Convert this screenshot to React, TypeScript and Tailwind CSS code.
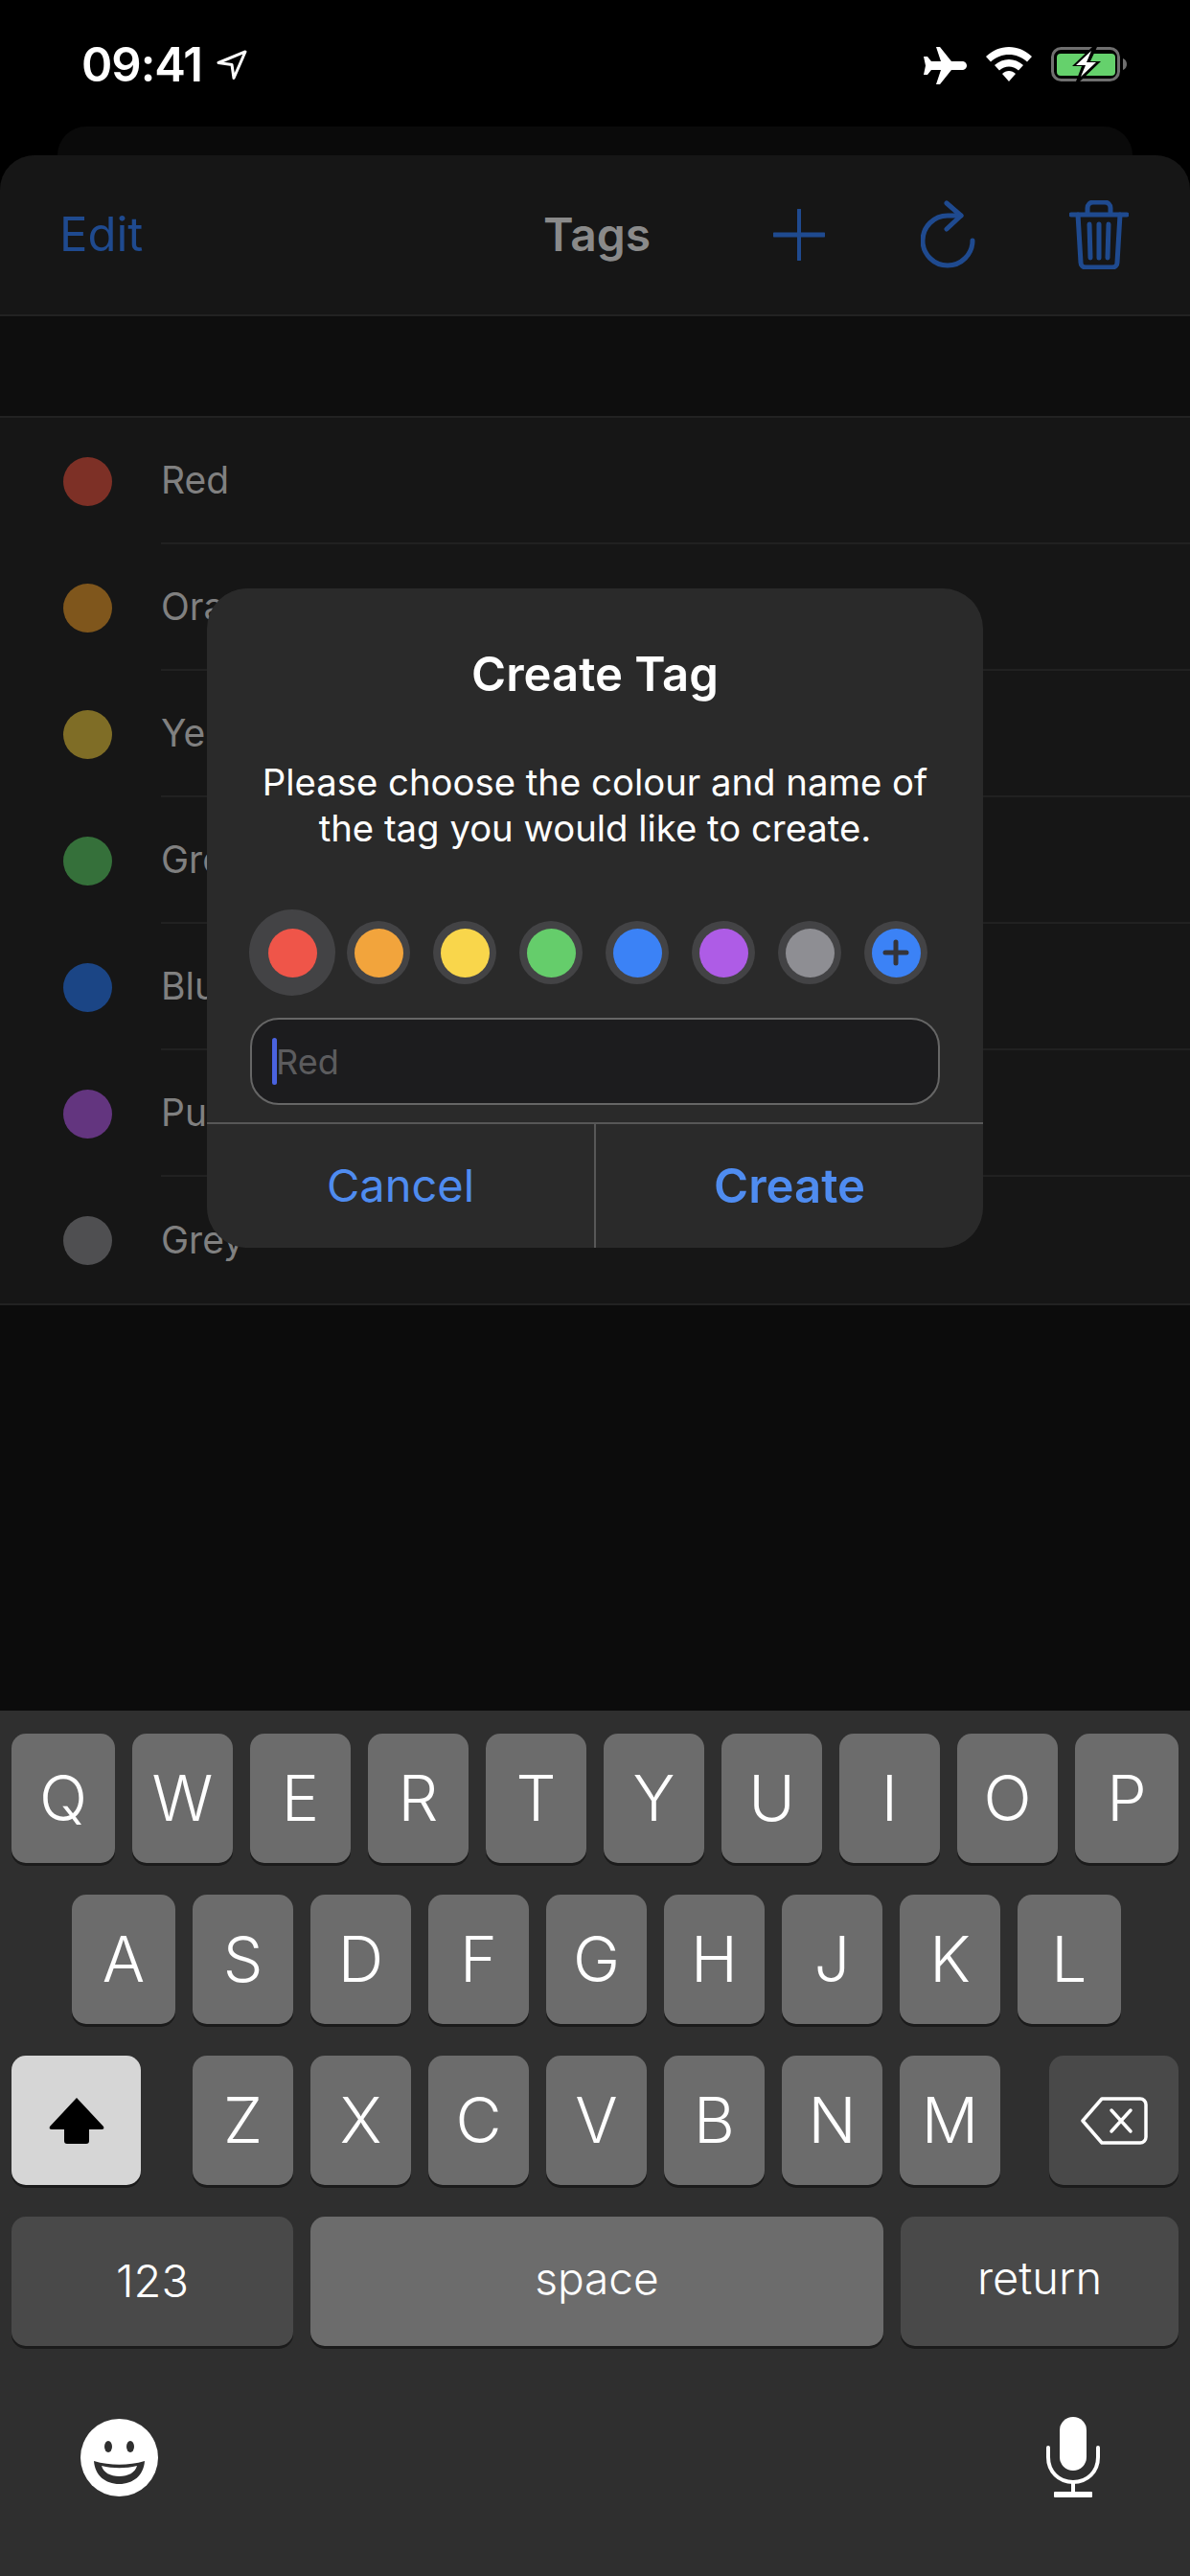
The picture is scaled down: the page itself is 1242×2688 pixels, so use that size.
const ROW1 = ["Q", "W", "E", "R", "T", "Y", "U", "I", "O", "P"];
const ROW2 = ["A", "S", "D", "F", "G", "H", "J", "K", "L"];
const ROW3 = ["Z", "X", "C", "V", "B", "N", "M"];

const TAGS = [
  { name: "Red", dot: "bg-[#7d3026]" },
  { name: "Orange", dot: "bg-[#7f561c]" },
  { name: "Yellow", dot: "bg-[#7f6d26]" },
  { name: "Green", dot: "bg-[#35703a]" },
  { name: "Blue", dot: "bg-[#1b4585]" },
  { name: "Purple", dot: "bg-[#63357f]" },
  { name: "Grey", dot: "bg-[#4f4f51]" },
];

const SWATCHES = ["bg-[#ef5549]", "bg-[#f2a43c]", "bg-[#f9d64b]", "bg-[#65cd6b]", "bg-[#3b82f6]", "bg-[#ae5ce6]", "bg-[#8e8e93]"];

function Key({ label, wide }: { label: string; wide?: boolean }) {
  return (
    <div className={`flex h-[135px] shrink-0 items-center justify-center rounded-[15px] bg-[#6c6c6c] text-[66px] font-light text-white shadow-[0_3px_0_#1b1b1b] ${wide ? "w-[108px]" : "w-[105px]"}`}>
      {label}
    </div>
  );
}

function StatusBar() {
  return (
    <div className="flex h-[132px] items-start justify-between pl-[85px] pr-[65px] pt-[49px]">
      <div className="flex items-center gap-[15px]">
        <span className="text-[49px] leading-[38px] font-semibold tracking-[-1px] text-white">09:41</span>
        <svg width="32" height="32" viewBox="0 0 32 32" fill="none">
          <path d="M30 2 2 13.500l14 2 2 14z" stroke="#fff" strokeWidth="3" strokeLinejoin="round" />
        </svg>
      </div>
      <div className="flex items-start gap-[20px]">
        <svg width="45" height="39" viewBox="0 0 45 39" fill="#fff">
          <path d="M13 0h4l12 15h11c3 0 5 2 5 4.500S43 24 40 24H29L17 39h-4l5-15H8l-4 5H0l2-9.500L0 10h4l4 5h10z" />
        </svg>
        <svg width="48" height="36" viewBox="0 0 48 36" fill="#fff">
          <path d="M24 0c9 0 17 3.500 24 10l-5 5.500C37.500 10.500 31 8 24 8S10.500 10.500 5 15.500L0 10C7 3.500 15 0 24 0z" />
          <path d="M24 13c5.500 0 10.500 2 15 6l-5 5.500c-3-2.500-6.500-4-10-4s-7 1.500-10 4L9 19c4.500-4 9.500-6 15-6z" />
          <path d="M24 25c2.500 0 5 1 7 3l-7 8-7-8c2-2 4.500-3 7-3z" />
        </svg>
        <svg width="80" height="36" viewBox="0 0 80 36" fill="none">
          <rect x="1.500" y="1.500" width="69" height="33" rx="9" stroke="#6f6f6f" strokeWidth="3" />
          <rect x="6" y="7" width="61" height="23" rx="4" fill="#65d16c" />
          <path d="M75 12c3 1 4 3.500 4 6s-1 5-4 6z" fill="#6f6f6f" />
          <path d="M43 0 22 20h10l-6 16h4l22-21H41l7-15z" fill="#000" />
          <path d="M42 4 26 19h10l-5 12 16-15H37z" fill="#fff" />
        </svg>
      </div>
    </div>
  );
}

function NavBar() {
  return (
    <div className="relative flex h-[168px] items-center border-b-2 border-[#222] pl-[62px] pr-[64px]">
      <span className="text-[49px] text-[#1f4a8f]">Edit</span>
      <span className="absolute left-[567px] text-[48px] font-semibold text-[#8a8a8a]">Tags</span>
      <div className="ml-auto flex items-center">
        <svg width="54" height="54" viewBox="0 0 54 54" stroke="#1f4a8f" strokeLinecap="round" fill="none">
          <path d="M27 1v52" strokeWidth="4" />
          <path d="M1 27h52" strokeWidth="5" />
        </svg>
        <svg className="ml-[100px]" width="60" height="72" viewBox="0 0 60 72" stroke="#1f4a8f" strokeWidth="5" strokeLinecap="round" strokeLinejoin="round" fill="none">
          <path d="M54 42a26 26 0 1 1-26-26h14" />
          <path d="M27 3l15 13-15 14" />
        </svg>
        <svg className="ml-[95px]" width="62" height="72" viewBox="0 0 62 72" stroke="#1f4a8f" strokeWidth="5" strokeLinecap="round" strokeLinejoin="round" fill="none">
          <path d="M2 15h58" />
          <path d="M19 14V8a6 6 0 0 1 6-6h12a6 6 0 0 1 6 6v6" />
          <path d="M9 15l3 50a5 5 0 0 0 5 5h28a5 5 0 0 0 5-5l3-50" />
          <path d="M21 25l1 35M31 25v35M41 25l-1 35" />
        </svg>
      </div>
    </div>
  );
}

function TagRow({ name, dot, last }: { name: string; dot: string; last: boolean }) {
  return (
    <div className="flex h-[132px] items-center">
      <div className={`ml-[66px] size-[51px] shrink-0 rounded-full ${dot}`} />
      <div className={`ml-[51px] flex h-full flex-1 items-center text-[39px] text-[#808080] ${last ? "" : "border-b-2 border-[#212121]"}`}>
        {name}
      </div>
    </div>
  );
}

function CreateTagDialog() {
  return (
    <div className="absolute left-[216px] top-[614px] flex h-[688px] w-[810px] flex-col rounded-[42px] bg-[#2a2a2a] text-center">
      <div className="pt-[60px] text-[49px] leading-[60px] font-semibold text-white">Create Tag</div>
      <p className="mt-[58px] text-[38.3px] leading-[48px] text-white">
        Please choose the colour and name of
        <br />
        the tag you would like to create.
      </p>
      <div className="mt-[61px] flex items-center pl-[44px]">
        {SWATCHES.map((color, i) => (
          <div key={color} className="flex w-[90px] justify-center">
            <div className={`flex items-center justify-center rounded-full bg-[#434345] ${i === 0 ? "size-[90px]" : "size-[66px]"}`}>
              <div className={`size-[51px] rounded-full ${color}`} />
            </div>
          </div>
        ))}
        <div className="flex w-[90px] justify-center">
          <div className="flex size-[66px] items-center justify-center rounded-full bg-[#434345]">
            <div className="flex size-[51px] items-center justify-center rounded-full bg-[#3b82f6]">
              <svg width="28" height="28" viewBox="0 0 28 28" stroke="#34343a" strokeWidth="5" strokeLinecap="round">
                <path d="M14 3v22M3 14h22" />
              </svg>
            </div>
          </div>
        </div>
      </div>
      <div className="mx-[45px] mt-[23px] flex h-[91px] items-center rounded-[30px] border-2 border-[#666] bg-[#1c1c1e] pl-[21px]">
        <div className="h-[49px] w-[5px] rounded-full bg-[#4a63e0]" />
        <span className="-ml-px text-[36px] text-[#5c5c5e]">Red</span>
      </div>
      <div className="mt-[18px] flex flex-1 border-t-2 border-[#575757]">
        <div className="flex flex-1 items-center justify-center border-r-2 border-[#575757] text-[47px] text-[#4f8cf0]">Cancel</div>
        <div className="flex flex-1 items-center justify-center text-[49px] font-semibold text-[#4f8cf0]">Create</div>
      </div>
    </div>
  );
}

function Keyboard() {
  return (
    <div className="flex h-[903px] flex-col gap-[33px] bg-[#2f2f2f] pt-[24px]">
      <div className="flex gap-[18px] px-[12px]">
        {ROW1.map((k, i) => (
          <Key key={k} label={k} wide={i === 0 || i === ROW1.length - 1} />
        ))}
      </div>
      <div className="flex gap-[18px] px-[75px]">
        {ROW2.map((k, i) => (
          <Key key={k} label={k} wide={i === 0 || i === ROW2.length - 1} />
        ))}
      </div>
      <div className="flex px-[12px]">
        <div className="flex h-[135px] w-[135px] items-center justify-center rounded-[15px] bg-[#d6d6d6] shadow-[0_3px_0_#1b1b1b]">
          <svg width="58" height="50" viewBox="0 0 58 50" fill="#000">
            <path d="M29 1 57 31c1 2 0 3-2 3H42v12c0 2-1 3-3 3H19c-2 0-3-1-3-3V34H3c-2 0-3-1-2-3z" />
          </svg>
        </div>
        <div className="ml-[54px] flex gap-[18px]">
          {ROW3.map((k) => (
            <Key key={k} label={k} />
          ))}
        </div>
        <div className="ml-auto flex h-[135px] w-[135px] items-center justify-center rounded-[15px] bg-[#494949] shadow-[0_3px_0_#1b1b1b]">
          <svg width="70" height="50" viewBox="0 0 70 50" fill="none" stroke="#fff" strokeWidth="3.500" strokeLinejoin="round" strokeLinecap="round">
            <path d="M22 2h40a6 6 0 0 1 6 6v34a6 6 0 0 1-6 6H22L2 25z" />
            <path d="M32 14l20 22M52 14 32 36" />
          </svg>
        </div>
      </div>
      <div className="flex gap-[18px] px-[12px]">
        <div className="flex h-[135px] w-[294px] items-center justify-center rounded-[15px] bg-[#494949] text-[47px] font-light text-white shadow-[0_3px_0_#1b1b1b]">123</div>
        <div className="flex h-[135px] flex-1 items-center justify-center rounded-[15px] bg-[#6c6c6c] pb-[6px] text-[46px] font-light text-white shadow-[0_3px_0_#1b1b1b]">space</div>
        <div className="flex h-[135px] w-[290px] items-center justify-center rounded-[15px] bg-[#494949] pb-[6px] text-[47px] font-light text-white shadow-[0_3px_0_#1b1b1b]">return</div>
      </div>
      <div className="flex items-center justify-between pl-[84px] pr-[94px] pt-[41px]">
        <svg width="81" height="81" viewBox="0 0 81 81">
          <circle cx="40.500" cy="40.500" r="40.500" fill="#fff" />
          <ellipse cx="29" cy="29" rx="4" ry="6" fill="#2f2f2f" />
          <ellipse cx="52" cy="29" rx="4" ry="6" fill="#2f2f2f" />
          <path d="M14 44c17 5 36 5 53 0-1 15-12 24-26.500 24S15 59 14 44z" fill="#2f2f2f" />
          <path d="M22 49c12 3 25 3 37 0-2 7-9 11-18.500 11S24 56 22 49z" fill="#fff" />
        </svg>
        <svg width="56" height="84" viewBox="0 0 56 84" fill="none">
          <rect x="14" y="0" width="28" height="56" rx="14" fill="#fff" />
          <path d="M2 32v10c0 15 11 26 26 26s26-11 26-26V32" stroke="#fff" strokeWidth="4" strokeLinecap="round" />
          <path d="M28 68v10" stroke="#fff" strokeWidth="4" />
          <rect x="8" y="78" width="40" height="6" rx="1" fill="#fff" />
        </svg>
      </div>
    </div>
  );
}

export default function App() {
  return (
    <div className="relative flex h-[2688px] w-[1242px] flex-col overflow-hidden bg-black font-['Inter','Liberation_Sans',sans-serif]">
      <StatusBar />
      <div className="mx-[60px] h-[30px] rounded-t-[36px] bg-[#0a0a0a]" />
      <div className="flex flex-1 flex-col overflow-hidden rounded-t-[36px] bg-[#0c0c0c]">
        <div className="bg-[#161616]">
          <NavBar />
        </div>
        <div className="h-[104px] bg-[#0e0e0e]" />
        <div className="border-y-2 border-[#222] bg-[#161616]">
          {TAGS.map((tag, i) => (
            <TagRow key={tag.name} name={tag.name} dot={tag.dot} last={i === TAGS.length - 1} />
          ))}
        </div>
      </div>
      <Keyboard />
      <CreateTagDialog />
    </div>
  );
}
